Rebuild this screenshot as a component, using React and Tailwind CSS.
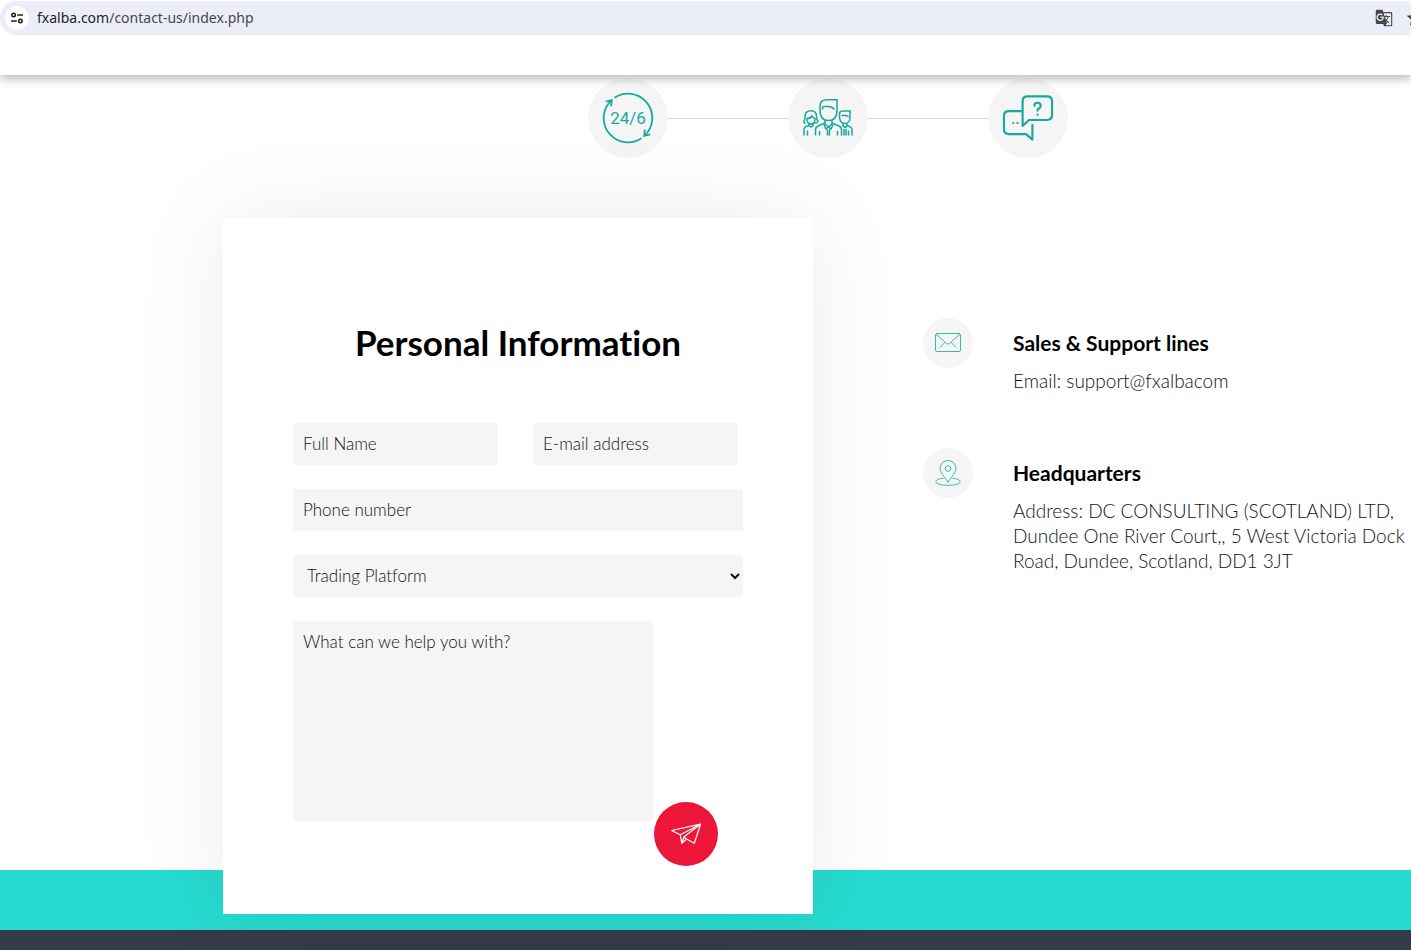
import { useState } from 'react';
import { MdGTranslate, MdStar } from 'react-icons/md';

const TuneIcon = () => (
  <svg width="12" height="12" viewBox="0 0 12 12" fill="none" stroke="#1f1f1f" strokeWidth="1.6">
    <circle cx="2.6" cy="3" r="1.7" />
    <path d="M6.2 3H12M0 9h5.8" />
    <circle cx="9.4" cy="9" r="1.7" />
  </svg>
);

const HoursIcon = () => (
  <svg width="52" height="52" viewBox="0 0 52 52" fill="none" stroke="#17a99d" strokeWidth="1.8">
    <path d="M12.500 5.700A24.300 24.300 0 0 1 44.800 41.300" />
    <path d="M7.200 10.700A24.300 24.300 0 0 0 39.500 46.300" />
    <path d="M3.800 9.600l6-1.400-.8 6.200M9.800 8.200l-2.600 2.500" />
    <path d="M42.800 37.600l-.6 6.200 6-1.400M42.200 43.800l2.600-2.500" />
    <text
      x="26"
      y="32"
      textAnchor="middle"
      className="font-[Roboto,sans-serif] text-[17px]"
      fill="#17a99d"
      stroke="none"
    >
      24/6
    </text>
  </svg>
);

const TeamIcon = () => (
  <svg width="50" height="40" viewBox="0 0 50 40" fill="none" stroke="#17a99d" strokeWidth="1.5">
    <path d="M17 12V8.500Q17 1.700 24 1.700H34V12Q34 22.500 25.500 22.500T17 12Z" />
    <path d="M19.500 11.500V10q0-1.500 2-1.500h3.500q4 0 6.500 3" />
    <path d="M22 22v4l3.500 3 3.500-3v-4" />
    <path d="M22 25l-7 3q-2.500 1-2.500 4v5.500M29 25l7 3q2.500 1 2.500 4v5.500M16.500 33v4.500M34.500 33v4.500M21 26.500l2 4.500 2.500-2 2.500 2 2-4.500M24.500 31.500v6M26.500 31.500v6" />
    <path d="M2.500 25.500q-1.500 0-1.500-2.500 1-1 1-4.500 0-5.800 6-5.800 5.500 0 5.500 5.800 0 3.500 1.500 4.500-1 2.500-3.500 2" />
    <path d="M4 20.500q0 5.500 4 5.500t4-5.500q-2-.5-3-2.500-1.500 2.500-5 2.500ZM6 25.500v2q-5 1-5 4v6M10 25.500v2l-2 1.500-2-1.500M4.500 32.500v5" />
    <path d="M36.500 18v-2q0-3 3.500-3h7v6q0 6.500-5.200 6.500T36.500 18ZM38.500 17.500h4q2.500 0 3 1.500" />
    <path d="M40 25.500v2.500l2 1.500 2-1.500v-2.500M44 27.500q5 1.500 5 4v6M45.500 32.500v5M41 31v6.500M43 31v6.500" />
  </svg>
);

const QuestionsIcon = () => (
  <svg width="52" height="48" viewBox="0 0 53 48" fill="none" stroke="#17a99d" strokeWidth="2.2" strokeLinejoin="round" strokeLinecap="round">
    <path d="M20.500 17H7q-5 0-5 5v13.500q0 5 5 5h17.500l6.500 5.500V31" />
    <path d="M21 32V7q0-5 5-5h20q5 0 5 5v14q0 5-5 5H27.500Z" />
    <path d="M33 11.500q0-3 3.200-3t3.200 3q0 1.700-1.600 2.600t-1.600 2.400" />
    <path d="M36.200 20.600v.2M11.500 28.800v.2M15.800 28.800v.2" />
  </svg>
);

const MailIcon = () => (
  <svg width="26" height="20" viewBox="0 0 26 20" fill="none" stroke="#3fb8ae" strokeWidth="1">
    <rect x="0.500" y="0.500" width="25" height="18" rx="1.500" />
    <path d="M1 1l10.500 9.500q1.500 1.200 3 0L25 1M5 14.500l5-5.200M21 14.500l-5-5.200" />
  </svg>
);

const PinIcon = () => (
  <svg width="26" height="26" viewBox="0 0 26 26" fill="none" stroke="#3fb8ae" strokeWidth="1">
    <path d="M13 22.500C10.500 18 5 12.500 5 8.500a8 8 0 0 1 16 0c0 4-5.500 9.500-8 14Z" />
    <circle cx="13" cy="8.500" r="2.800" />
    <path d="M8.500 18.300C4 18.600.8 20 .8 21.700c0 2 5.400 3.600 12.200 3.600s12.200-1.600 12.200-3.600c0-1.700-3.200-3.100-7.700-3.400" />
  </svg>
);

const PlaneIcon = () => (
  <svg width="32" height="22" viewBox="0 0 32 22" fill="none" stroke="#ffffff" strokeWidth="1.2" strokeLinejoin="round">
    <path d="M1.500 7.500L30.500 1.200l-6.200 19.100-7.800-4.300M1.500 7.500l8.800 4.300L30.500 1.200" />
    <path d="M10.300 11.800l1.500 8.500 2-6.300L30.500 1.200M11.800 20.300l4.700-4.300-2.700-2" />
  </svg>
);

const steps = [
  { id: 'hours', Icon: HoursIcon },
  { id: 'team', Icon: TeamIcon },
  { id: 'questions', Icon: QuestionsIcon },
];

const contacts = [
  { id: 'sales', title: 'Sales & Support lines', text: 'Email: support@fxalbacom', Icon: MailIcon },
  {
    id: 'hq',
    title: 'Headquarters',
    text: 'Address: DC CONSULTING (SCOTLAND) LTD, Dundee One River Court,, 5 West Victoria Dock Road, Dundee, Scotland, DD1 3JT',
    Icon: PinIcon,
  },
];

const AddressBar = () => (
  <div className="relative z-30 bg-white pt-px">
    <div className="flex h-[34px] items-center overflow-hidden rounded-l-full bg-[#ebeef8] pl-[5px]">
      <button aria-label="Site information" className="flex size-6 items-center justify-center rounded-full bg-white">
        <TuneIcon />
      </button>
      <p className="ml-2 flex-1 font-['Noto_Sans',sans-serif] text-[14px] leading-5 text-[#474747]">
        <span className="text-[#1f1f1f]">fxalba.com</span>/contact-us/index.php
      </p>
      <button aria-label="Translate this page" className="text-[#474747]">
        <MdGTranslate size={18} />
      </button>
      <button aria-label="Bookmark this page" className="-mr-3.5 ml-3 text-[#474747]">
        <MdStar size={20} />
      </button>
    </div>
  </div>
);

const ContactForm = () => {
  const [form, setForm] = useState({ name: '', email: '', phone: '', platform: '', message: '' });

  const handleChange = (e) => setForm({ ...form, [e.target.name]: e.target.value });

  const field =
    'h-[42px] bg-[#f5f5f5] px-2.5 pb-px text-[17px] font-light text-[#111111] outline-none placeholder:text-[#111111]';

  return (
    <form onSubmit={(e) => e.preventDefault()} className="flex flex-col gap-6">
      <div className="flex gap-[35px]">
        <input name="name" aria-label="Full Name" placeholder="Full Name" value={form.name} onChange={handleChange} className={`${field} w-[205px]`} />
        <input name="email" type="email" aria-label="E-mail address" placeholder="E-mail address" value={form.email} onChange={handleChange} className={`${field} w-[205px]`} />
      </div>
      <input name="phone" type="tel" aria-label="Phone number" placeholder="Phone number" value={form.phone} onChange={handleChange} className={`${field} w-full`} />
      <select name="platform" aria-label="Trading Platform" value={form.platform} onChange={handleChange} className={`${field} w-full pr-0`}>
        <option value="">Trading Platform</option>
        <option value="mt4">MetaTrader 4</option>
      </select>
      <div className="flex h-[245px] items-end gap-px">
        <textarea
          name="message"
          aria-label="What can we help you with?"
          placeholder="What can we help you with?"
          value={form.message}
          onChange={handleChange}
          className="h-[200px] w-[360px] resize-none self-start bg-[#f5f5f5] px-2.5 py-2 text-[17px] leading-[25px] font-light text-[#111111] outline-none placeholder:text-[#111111]"
        />
        <button type="submit" aria-label="Send" className="flex size-16 items-center justify-center rounded-full bg-[#ed1538]">
          <PlaneIcon />
        </button>
      </div>
    </form>
  );
};

const App = () => {
  return (
    <div className="flex min-h-screen flex-col bg-white font-['Lato',sans-serif] text-black [font-variant-ligatures:none]">
      <AddressBar />
      <header className="relative z-20 h-10 bg-white shadow-[0_2px_10px_1px_rgba(0,0,0,0.3)]" />

      {/* Steps */}
      <div className="flex justify-center pt-[3px] pl-[245px]">
        {steps.map(({ id, Icon }, i) => (
          <div key={id} className="flex items-center">
            {i > 0 && <div className="h-px w-[120px] bg-[#d9d9d9]" />}
            <div className="flex size-20 items-center justify-center rounded-full bg-[#f5f5f5]">
              <Icon />
            </div>
          </div>
        ))}
      </div>

      {/* Form and contact details */}
      <main className="mt-[60px] flex items-start pl-[223px]">
        <section className="relative z-10 -mb-11 w-[590px] shrink-0 bg-white px-[70px] pt-[103px] pb-12 shadow-[0_0_90px_rgba(0,0,0,0.08)]">
          <h1 className="mb-[59px] text-center text-[35px] leading-[43px] font-bold">Personal Information</h1>
          <ContactForm />
        </section>
        <section className="flex flex-1 flex-col gap-[55px] pt-[100px] pl-[110px]">
          {contacts.map(({ id, title, text, Icon }) => (
            <div key={id} className="flex items-start gap-10">
              <div className="flex size-[50px] shrink-0 items-center justify-center rounded-full bg-[#f5f5f5]">
                <Icon />
              </div>
              <div>
                <h2 className="text-[21px] leading-[50px] font-bold">{title}</h2>
                <p className="text-[19px] leading-[25px] font-light text-[#111111]">{text}</p>
              </div>
            </div>
          ))}
        </section>
      </main>

      <div className="h-[60px] bg-[#27dacf]" />
      <footer className="min-h-5 flex-1 bg-[#353b49]" />
    </div>
  );
};

export default App;
